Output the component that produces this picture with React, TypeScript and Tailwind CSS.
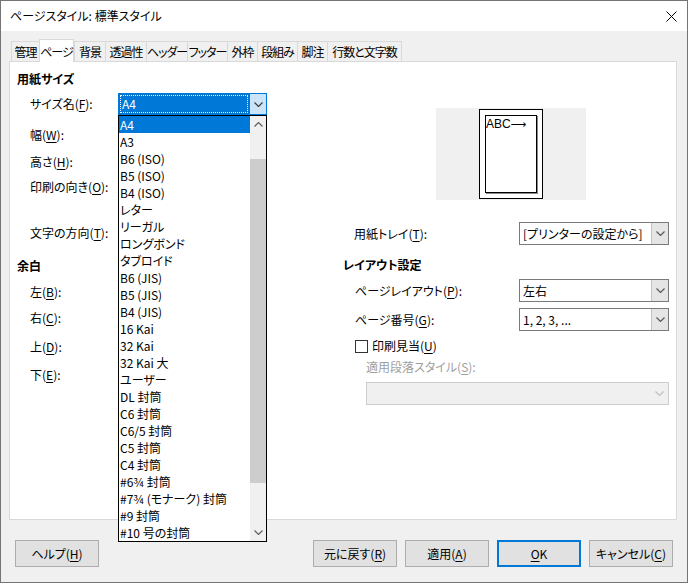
const tabs = [
  { label: '管理', w: 'w-[28px]' },
  { label: 'ページ', w: 'w-[35px]', active: true },
  { label: '背景', w: 'w-[31px]' },
  { label: '透過性', w: 'w-[41px]' },
  { label: 'ヘッダー', w: 'w-[41px]' },
  { label: 'フッター', w: 'w-[40px]' },
  { label: '外枠', w: 'w-[30px]' },
  { label: '段組み', w: 'w-[40px]' },
  { label: '脚注', w: 'w-[30px]' },
  { label: '行数と文字数', w: 'w-[75px]' },
];

const sizes = [
  'A4', 'A3', 'B6 (ISO)', 'B5 (ISO)', 'B4 (ISO)', 'レター', 'リーガル', 'ロングボンド', 'タブロイド',
  'B6 (JIS)', 'B5 (JIS)', 'B4 (JIS)', '16 Kai', '32 Kai', '32 Kai 大', 'ユーザー', 'DL 封筒', 'C6 封筒',
  'C6/5 封筒', 'C5 封筒', 'C4 封筒', '#6¾ 封筒', '#7¾ (モナーク) 封筒', '#9 封筒', '#10 号の封筒',
];

const Chevron = ({ up = false }: { up?: boolean }) => (
  <svg width="9" height="5" viewBox="0 0 9 5">
    <polyline
      points={up ? '0.5,4.5 4.5,0.5 8.5,4.5' : '0.5,0.5 4.5,4.5 8.5,0.5'}
      fill="none"
      stroke="currentColor"
      strokeWidth="1.2"
    />
  </svg>
);

// underlined access key inside a label
const Key = ({ k }: { k: string }) => <span className="underline underline-offset-2">{k}</span>;

const Combo = ({ value, disabled = false, w = 'w-[150px]' }: { value?: string; disabled?: boolean; w?: string }) => (
  <div className={`h-[23px] ${w} flex border ${disabled ? 'border-[#cccccc] bg-[#f0f0f0]' : 'border-[#7a7a7a] bg-white'}`}>
    <div className="flex-1 flex items-center pl-[3px] whitespace-nowrap">{value}</div>
    <div
      className={`w-[17px] flex items-center justify-center ${
        disabled ? 'text-[#c0c0c0]' : 'bg-[#e5e5e5] border-l border-[#c2c2c2] text-[#5a5a5a]'
      }`}
    >
      <Chevron />
    </div>
  </div>
);

const Button = ({ children, primary = false }: { children: React.ReactNode; primary?: boolean }) => (
  <div
    className={`w-[84px] h-[27px] flex items-center justify-center bg-[#e1e1e1] whitespace-nowrap ${
      primary ? 'border-2 border-[#0078d7]' : 'border border-[#adadad]'
    }`}
  >
    {children}
  </div>
);

export default function App() {
  return (
    <div className="relative w-[688px] h-[583px] bg-[#f0f0f0] border border-[#757575] text-[12px] leading-[16px] text-black [font-family:'Noto_Sans_CJK_JP',sans-serif] [font-feature-settings:'palt']">
      {/* Title bar */}
      <div className="h-[30px] bg-white flex items-center justify-between pl-[9px] pr-[10px]">
        <span>ページスタイル: 標準スタイル</span>
        <svg width="11" height="11" viewBox="0 0 11 11">
          <path d="M0.5 0.5 L10.5 10.5 M10.5 0.5 L0.5 10.5" stroke="#000" strokeWidth="1" />
        </svg>
      </div>

      {/* Tabs */}
      <div className="mt-[8px] h-[22px] pl-[10px] flex items-end">
        {tabs.map((t, i) =>
          t.active ? (
            <div
              key={t.label}
              className={`${t.w} h-[23px] -mb-[1px] relative z-10 bg-white border border-b-0 border-[#d9d9d9] flex items-center justify-center pt-[1px] whitespace-nowrap tracking-[-1px]`}
            >
              {t.label}
            </div>
          ) : (
            <div
              key={t.label}
              className={`${t.w} h-[20px] border-t border-l border-[#d9d9d9] ${
                i === tabs.length - 1 ? 'border-r' : ''
              } flex items-center justify-center whitespace-nowrap tracking-[-1px]`}
            >
              {t.label}
            </div>
          )
        )}
      </div>

      {/* Page panel */}
      <div className="ml-[8px] w-[668px] h-[459px] bg-white border border-[#d9d9d9] flex">
        {/* Left column */}
        <div className="w-[333px]">
          <div className="mt-[8px] h-[18px] pl-[7px] flex items-center font-bold">用紙サイズ</div>
          <div className="mt-[5px] h-[22px] flex items-center">
            <div className="w-[108px] pl-[20px]">
              サイズ名(<Key k="F" />):
            </div>
            <div className="w-[149px] h-[22px] flex border border-[#0078d7]">
              <div className="flex-1 bg-[#0078d7] p-[1px]">
                <div className="h-full border border-dotted border-white text-white flex items-center pl-[1px]">A4</div>
              </div>
              <div className="w-[17px] bg-[#cce4f7] border-l border-[#0078d7] flex items-center justify-center text-[#3d3d3d]">
                <Chevron />
              </div>
            </div>
          </div>
          <div className="mt-[9px] h-[22px] pl-[20px] flex items-center">
            幅(<Key k="W" />):
          </div>
          <div className="mt-[5px] h-[22px] pl-[20px] flex items-center">
            高さ(<Key k="H" />):
          </div>
          <div className="mt-[3px] h-[22px] pl-[20px] flex items-center">
            印刷の向き(<Key k="O" />):
          </div>
          <div className="mt-[24px] h-[22px] pl-[20px] flex items-center">
            文字の方向(<Key k="T" />):
          </div>
          <div className="mt-[13px] h-[18px] pl-[7px] flex items-center font-bold">余白</div>
          <div className="mt-[6px] h-[22px] pl-[20px] flex items-center">
            左(<Key k="B" />):
          </div>
          <div className="mt-[4px] h-[22px] pl-[20px] flex items-center">
            右(<Key k="C" />):
          </div>
          <div className="mt-[7px] h-[22px] pl-[20px] flex items-center">
            上(<Key k="D" />):
          </div>
          <div className="mt-[6px] h-[22px] pl-[20px] flex items-center">
            下(<Key k="E" />):
          </div>
        </div>

        {/* Right column */}
        <div className="flex-1">
          <div className="mt-[46px] ml-[93px] w-[150px] h-[92px] bg-[#f0f0f0] flex items-center justify-center">
            <div className="w-[64px] h-[90px] border border-black bg-white p-[5px]">
              <div className="h-full border border-black shadow-[1px_1px_0_#8a8a8a] text-[12px] leading-[14px] pt-[1px] whitespace-nowrap [font-family:'Liberation_Sans','DejaVu_Sans',sans-serif]">
                ABC<span className="text-[11px]">⟶</span>
              </div>
            </div>
          </div>
          <div className="mt-[22px] h-[23px] flex items-center">
            <div className="w-[176px] pl-[11px]">
              用紙トレイ(<Key k="T" />):
            </div>
            <Combo value="[プリンターの設定から]" />
          </div>
          <div className="mt-[11px] h-[18px] flex items-center font-bold">レイアウト設定</div>
          <div className="mt-[5px] h-[23px] flex items-center">
            <div className="w-[176px] pl-[12px]">
              ページレイアウト(<Key k="P" />):
            </div>
            <Combo value="左右" />
          </div>
          <div className="mt-[6px] h-[23px] flex items-center">
            <div className="w-[176px] pl-[12px]">
              ページ番号(<Key k="G" />):
            </div>
            <Combo value="1, 2, 3, ..." />
          </div>
          <div className="mt-[6px] h-[18px] pl-[12px] flex items-center gap-[4px]">
            <div className="w-[13px] h-[13px] border border-[#333333] bg-white" />
            <span>
              印刷見当(<Key k="U" />)
            </span>
          </div>
          <div className="mt-[4px] h-[16px] pl-[23px] flex items-center text-[#a0a0a0]">
            適用段落スタイル(<Key k="S" />):
          </div>
          <div className="mt-[7px] ml-[23px]">
            <Combo disabled w="w-[303px]" />
          </div>
        </div>
      </div>

      {/* Dialog buttons */}
      <div className="mt-[20px] px-[14px] flex items-center">
        <Button>
          ヘルプ(<Key k="H" />)
        </Button>
        <div className="ml-auto flex gap-[8px]">
          <Button>
            元に戻す(<Key k="R" />)
          </Button>
          <Button>
            適用(<Key k="A" />)
          </Button>
          <Button primary>
            <span>
              <Key k="O" />K
            </span>
          </Button>
          <Button>
            キャンセル(<Key k="C" />)
          </Button>
        </div>
      </div>

      {/* Open size list popup */}
      <div className="absolute left-[117px] top-[114px] w-[149px] h-[427px] border border-black bg-white flex z-20">
        <div className="flex-1">
          {sizes.map((s, i) => (
            <div
              key={s}
              className={`h-[17px] pl-[1px] flex items-center whitespace-nowrap ${i === 0 ? 'bg-[#0078d7] text-white' : ''}`}
            >
              {s}
            </div>
          ))}
        </div>
        <div className="w-[16px] bg-[#f0f0f0] flex flex-col text-[#606060]">
          <div className="h-[17px] flex items-center justify-center">
            <Chevron up />
          </div>
          <div className="mt-[26px] h-[324px] bg-[#cdcdcd]" />
          <div className="mt-auto h-[17px] flex items-center justify-center">
            <Chevron />
          </div>
        </div>
      </div>
    </div>
  );
}
